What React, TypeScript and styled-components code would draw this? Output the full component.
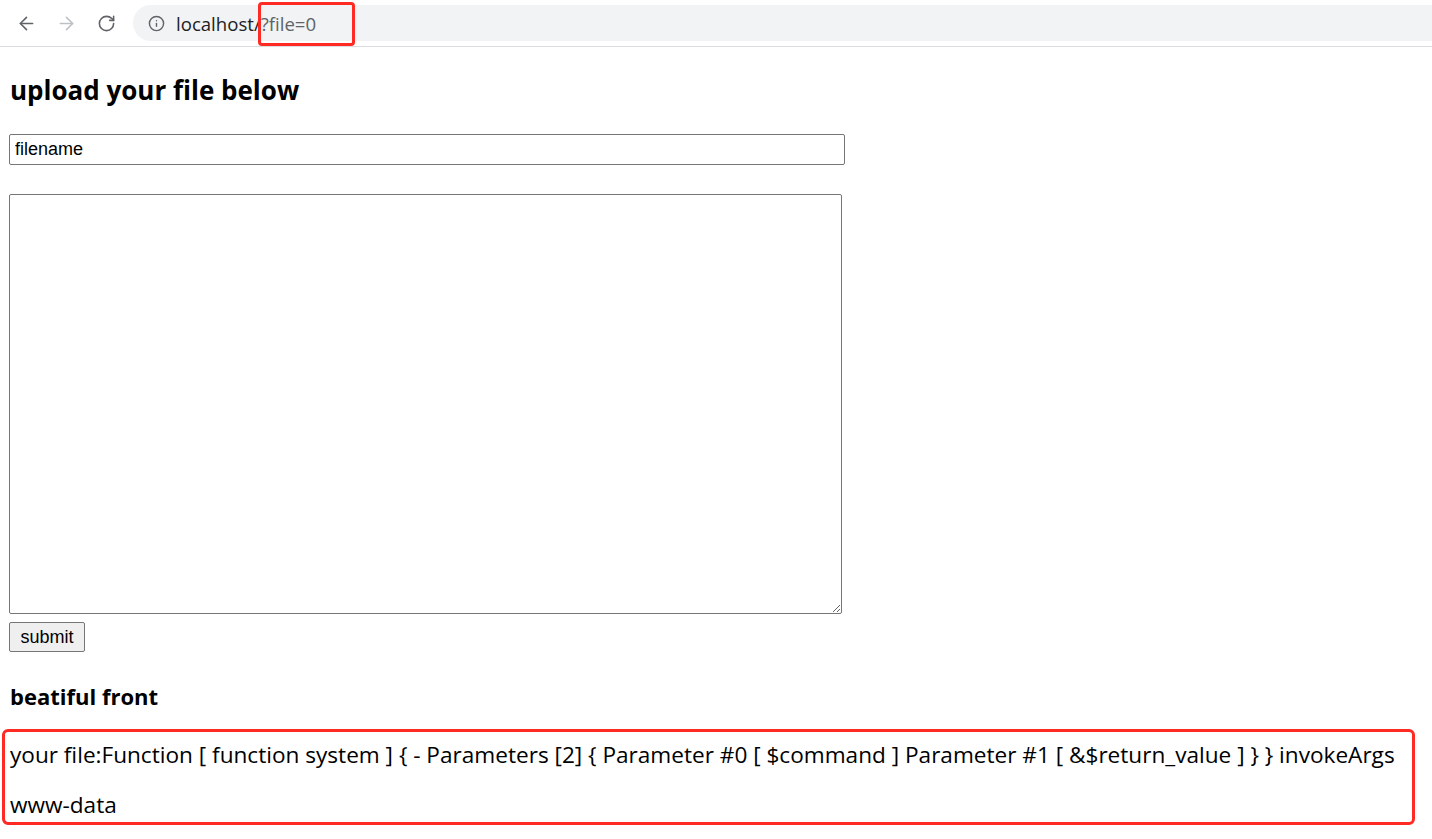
import * as React from 'react';
import styled, { createGlobalStyle } from 'styled-components';
import { ArrowLeft, ArrowRight, RotateCw, Info } from 'lucide-react';

const GlobalStyle = createGlobalStyle`
    html, body {
        margin: 0;
        padding: 0;
        background: #fff;
    }
    body {
        font-family: 'Open Sans', 'Noto Sans', sans-serif;
        color: #000;
    }
`;

const resultText =
    'your file:Function [ function system ] { - Parameters [2] { Parameter #0 [ $command ] Parameter #1 [ &$return_value ] } } invokeArgs';

export default function App() {
    const [filename, setFilename] = React.useState('filename');
    const [content, setContent] = React.useState('');

    return (
        <StyledPage>
            <GlobalStyle />
            <StyledToolbar>
                <StyledNavButton>
                    <ArrowLeft size={21} strokeWidth={1.8} />
                </StyledNavButton>
                <StyledNavButton disabled>
                    <ArrowRight size={21} strokeWidth={1.8} />
                </StyledNavButton>
                <StyledNavButton>
                    <RotateCw size={19} strokeWidth={2} />
                </StyledNavButton>
                <StyledOmnibox>
                    <Info size={17} strokeWidth={2} color="#5f6368" />
                    <StyledUrl>
                        localhost/
                        <span className="query">
                            ?file=0
                            <StyledMark className="url-mark" />
                        </span>
                    </StyledUrl>
                </StyledOmnibox>
            </StyledToolbar>

            <StyledMain>
                <StyledTitle>upload your file below</StyledTitle>
                <form
                    onSubmit={(e) => {
                        e.preventDefault();
                    }}
                >
                    <StyledInput value={filename} onChange={(e) => setFilename(e.target.value)} />
                    <StyledTextarea value={content} onChange={(e) => setContent(e.target.value)} />
                    <StyledSubmit type="submit">submit</StyledSubmit>
                </form>
                <StyledSubtitle>beatiful front</StyledSubtitle>
                <StyledOutput>
                    <div>{resultText}</div>
                    <div>www-data</div>
                    <StyledMark className="output-mark" />
                </StyledOutput>
            </StyledMain>
        </StyledPage>
    );
}

const StyledPage = styled.div`
    display: flex;
    flex-direction: column;
    min-height: 839px;
    overflow: hidden;
`;

const StyledToolbar = styled.div`
    display: flex;
    align-items: center;
    height: 46px;
    padding-left: 14px;
    border-bottom: 1px solid #dadce0;
    background: #fff;
`;

const StyledNavButton = styled.button`
    display: flex;
    align-items: center;
    justify-content: center;
    width: 24px;
    height: 24px;
    padding: 0;
    margin-right: 16px;
    border: none;
    background: none;
    color: ${(p) => (p.disabled ? '#bdc1c6' : '#5f6368')};
`;

const StyledOmnibox = styled.div`
    display: flex;
    align-items: center;
    gap: 11px;
    flex: 1;
    height: 36px;
    margin-left: -1px;
    margin-right: -40px;
    padding-left: 15px;
    border-radius: 18px;
    background: #f1f3f4;
`;

const StyledUrl = styled.div`
    font-family: 'Open Sans', 'Noto Sans', sans-serif;
    font-size: 18.6px;
    line-height: 25px;
    color: #202124;
    .query {
        position: relative;
        color: #5f6368;
    }
    .url-mark {
        top: -9px;
        bottom: -10px;
        left: -3px;
        right: -39px;
        border-radius: 4px;
    }
`;

const StyledMark = styled.span`
    position: absolute;
    border: 3px solid #ff2a24;
    pointer-events: none;
`;

const StyledMain = styled.div`
    padding: 0 10px;
`;

const StyledTitle = styled.h2`
    margin: 26px 0 27px;
    font-size: 26px;
    line-height: 34px;
    font-weight: 700;
`;

const StyledInput = styled.input`
    display: block;
    box-sizing: border-box;
    width: 836px;
    height: 31px;
    margin: 0 0 29px -1px;
    padding: 0 5px;
    border: 1px solid #767676;
    border-radius: 2px;
    font-family: 'Liberation Sans', Arial, sans-serif;
    font-size: 18px;
    color: #000;
`;

const StyledTextarea = styled.textarea`
    display: block;
    box-sizing: border-box;
    width: 833px;
    height: 420px;
    margin: 0 0 8px -1px;
    border: 1px solid #767676;
    border-radius: 2px;
    font-family: 'Liberation Mono', monospace;
    font-size: 16px;
`;

const StyledSubmit = styled.button`
    display: block;
    box-sizing: border-box;
    width: 76px;
    height: 30px;
    margin-left: -1px;
    padding: 0;
    border: 1px solid #767676;
    border-radius: 2px;
    background: #efefef;
    font-family: 'Liberation Sans', Arial, sans-serif;
    font-size: 18px;
    color: #000;
`;

const StyledSubtitle = styled.h3`
    margin: 29px 0 19px;
    font-size: 22px;
    line-height: 30px;
    font-weight: 700;
`;

const StyledOutput = styled.div`
    position: relative;
    font-size: 22.6px;
    line-height: 50px;
    white-space: nowrap;
    .output-mark {
        top: -1px;
        bottom: 5px;
        left: -8px;
        width: 1413px;
        box-sizing: border-box;
        border-radius: 6px;
    }
`;
